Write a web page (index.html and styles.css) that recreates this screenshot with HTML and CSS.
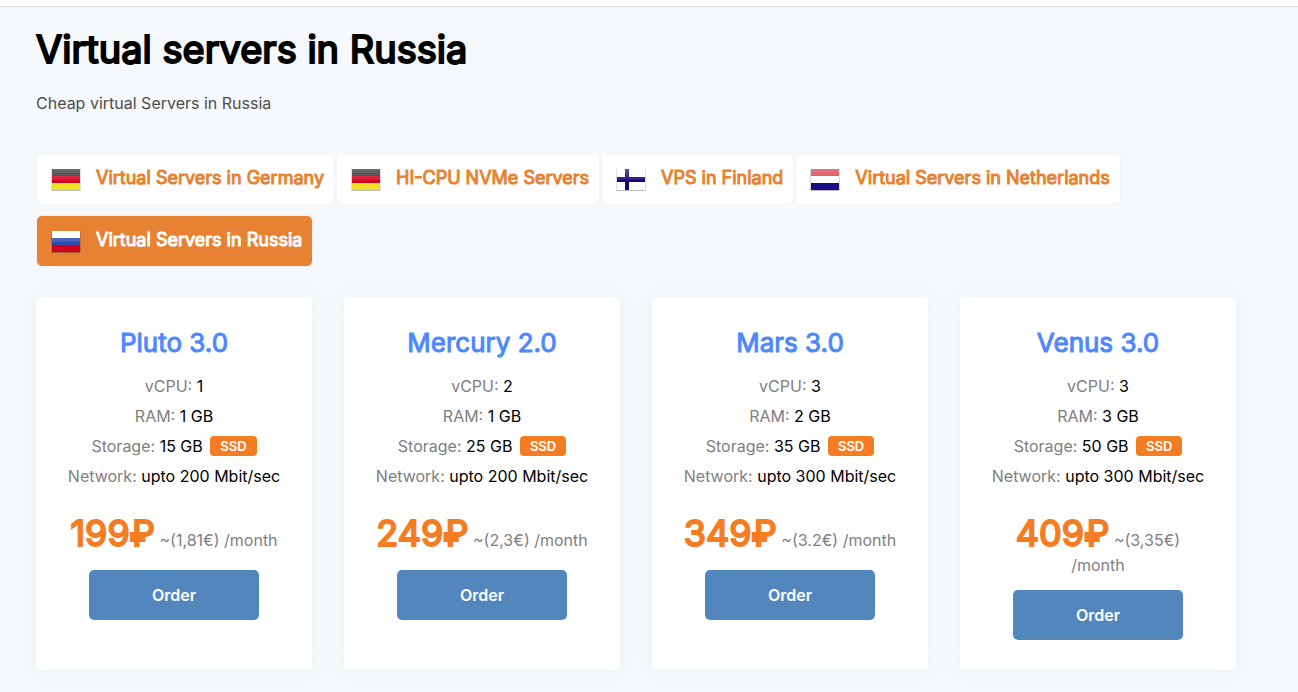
FILE: index.html
```
<!DOCTYPE html>
<html lang="en">
<head>
<meta charset="utf-8">
<title>Virtual servers in Russia</title>
<link rel="stylesheet" href="styles.css">
</head>
<body>
<svg class="defs" aria-hidden="true">
  <defs>
    <linearGradient id="gloss" x1="0" y1="0" x2="0" y2="1">
      <stop offset="0" stop-color="#fff" stop-opacity=".3"/>
      <stop offset=".5" stop-color="#fff" stop-opacity=".1"/>
      <stop offset=".55" stop-color="#fff" stop-opacity="0"/>
      <stop offset="1" stop-color="#fff" stop-opacity="0"/>
    </linearGradient>
    <g id="shine">
      <path fill="url(#gloss)" d="M2 5h28v21H2z"/>
      <path fill="none" stroke="#000" stroke-opacity=".14" d="M1.500 5v21.500h29V5"/>
      <path fill="#000" fill-opacity=".15" d="M2 26h28v1H2z"/>
    </g>
    <symbol id="germany" viewBox="0 -1 32 32">
      <path fill="#303030" d="M2 5h28v7H2z"/><path fill="#d1001f" d="M2 12h28v7H2z"/><path fill="#f1df25" d="M2 19h28v7H2z"/>
      <use href="#shine"/>
    </symbol>
    <symbol id="finland" viewBox="0 -1 32 32">
      <path fill="#fff" d="M2 5h28v21H2z"/><path fill="#1b0070" d="M2 13h28v5H2zM10 5h4v21h-4z"/>
      <use href="#shine"/>
    </symbol>
    <symbol id="netherlands" viewBox="0 -1 32 32">
      <path fill="#d63e4b" d="M2 5h28v7H2z"/><path fill="#fff" d="M2 12h28v7H2z"/><path fill="#1b0d82" d="M2 19h28v7H2z"/>
      <use href="#shine"/>
    </symbol>
    <symbol id="russia" viewBox="0 -1 32 32">
      <path fill="#fff" d="M2 5h28v7H2z"/><path fill="#2c4bad" d="M2 12h28v7H2z"/><path fill="#d1001f" d="M2 19h28v7H2z"/>
      <use href="#shine"/>
    </symbol>
  </defs>
</svg>
<header class="topbar"></header>
<main class="page">
  <h1 class="title">Virtual servers in Russia</h1>
  <p class="lead">Cheap virtual Servers in Russia</p>
  <nav class="tabs">
    <a class="tab" href="#"><svg class="flag"><use href="#germany"/></svg><span class="label">Virtual Servers in Germany</span></a>
    <a class="tab" href="#"><svg class="flag"><use href="#germany"/></svg><span class="label">HI-CPU NVMe Servers</span></a>
    <a class="tab" href="#"><svg class="flag"><use href="#finland"/></svg><span class="label">VPS in Finland</span></a>
    <a class="tab" href="#"><svg class="flag"><use href="#netherlands"/></svg><span class="label">Virtual Servers in Netherlands</span></a>
    <a class="tab active" href="#"><svg class="flag"><use href="#russia"/></svg><span class="label">Virtual Servers in Russia</span></a>
  </nav>
  <section class="plans">
    <article class="plan">
      <h2 class="name">Pluto 3.0</h2>
      <ul class="specs">
        <li>vCPU: <b>1</b></li><li>RAM: <b>1 GB</b></li><li>Storage: <b>15 GB</b> <span class="badge">SSD</span></li><li>Network: <b>upto 200 Mbit/sec</b></li>
      </ul>
      <p class="cost"><strong class="price">199₽</strong> ~(1,81€) /month</p>
      <button class="order">Order</button>
    </article>
    <article class="plan">
      <h2 class="name">Mercury 2.0</h2>
      <ul class="specs">
        <li>vCPU: <b>2</b></li><li>RAM: <b>1 GB</b></li><li>Storage: <b>25 GB</b> <span class="badge">SSD</span></li><li>Network: <b>upto 200 Mbit/sec</b></li>
      </ul>
      <p class="cost"><strong class="price">249₽</strong> ~(2,3€) /month</p>
      <button class="order">Order</button>
    </article>
    <article class="plan">
      <h2 class="name">Mars 3.0</h2>
      <ul class="specs">
        <li>vCPU: <b>3</b></li><li>RAM: <b>2 GB</b></li><li>Storage: <b>35 GB</b> <span class="badge">SSD</span></li><li>Network: <b>upto 300 Mbit/sec</b></li>
      </ul>
      <p class="cost"><strong class="price">349₽</strong> ~(3.2€) /month</p>
      <button class="order">Order</button>
    </article>
    <article class="plan">
      <h2 class="name">Venus 3.0</h2>
      <ul class="specs">
        <li>vCPU: <b>3</b></li><li>RAM: <b>3 GB</b></li><li>Storage: <b>50 GB</b> <span class="badge">SSD</span></li><li>Network: <b>upto 300 Mbit/sec</b></li>
      </ul>
      <p class="cost"><strong class="price">409₽</strong> ~(3,35€) /month</p>
      <button class="order">Order</button>
    </article>
  </section>
</main>
</body>
</html>
```
FILE: styles.css
```
* { box-sizing: border-box; }
body { margin: 0; background: #f5f9fc; color: #000; font: 400 16px/24px Inter, sans-serif; }
.defs { position: absolute; width: 0; height: 0; }
.topbar { height: 7px; background: #fff; border-bottom: 1px solid #dedede; }
.page { padding: 17px 62px 22px 36px; }
.title { margin: 0; font-size: 38px; line-height: 50px; font-weight: 400; -webkit-text-stroke: 2px; }
.lead { margin: 17px 0 38px; color: #4d4d4d; }
.tabs { display: flex; flex-wrap: wrap; gap: 10px 1px; }
.tab { display: flex; align-items: center; height: 52px; padding: 0 10px 0 13px; border: 1px solid #f0f2f4; border-radius: 6px; background: #fff; color: #e68231; font-size: 18px; font-weight: 400; -webkit-text-stroke: 1px; text-decoration: none; }
.tab.active { background: #e68231; color: #fff; }
.label { padding-bottom: 2px; }
.flag { width: 32px; height: 32px; margin-right: 14px; }
.plans { display: grid; grid-template-columns: repeat(4, 1fr); gap: 32px; margin-top: 30px; }
.plan { padding: 28px 30px 30px; border-radius: 5px; background: #fff; box-shadow: 0 0 20px rgba(60, 90, 120, .05); text-align: center; }
.name { margin: 0 0 10px; color: #4d88ff; font-size: 26px; line-height: 36px; font-weight: 400; -webkit-text-stroke: 1px; }
.specs { margin: 0 -10px; padding: 0; list-style: none; color: #808080; line-height: 30px; }
.specs b { color: #000; font-weight: 400; }
.badge { display: inline-block; margin-left: 3px; padding: 0 10px; border-radius: 4px; background: #f47d24; color: #fff; font-size: 13px; line-height: 20px; font-weight: 600; vertical-align: 1px; }
.cost { min-height: 44px; margin: 22px 0 13px; color: #808080; }
.price { color: #f47d24; font-size: 36px; line-height: 40px; font-weight: 400; -webkit-text-stroke: 2px; }
.order { width: 170px; height: 50px; border: 0; border-radius: 5px; background: #5286bd; color: #fff; font: 600 16px Inter, sans-serif; }
```
